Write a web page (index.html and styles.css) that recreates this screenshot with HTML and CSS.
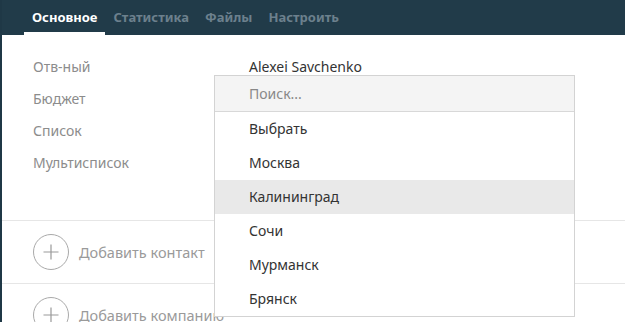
FILE: index.html
```html
<!DOCTYPE html>
<html lang="ru">
<head>
    <meta charset="UTF-8">
    <title>Карточка</title>
    <link rel="stylesheet" href="styles.css">
</head>
<body>
<div class="page">
    <div class="tabs">
        <span class="tab active">Основное</span>
        <span class="tab">Статистика</span>
        <span class="tab">Файлы</span>
        <span class="tab">Настроить</span>
    </div>

    <div class="fields">
        <div class="row">
            <div class="label">Отв-ный</div>
            <div class="value">
                Alexei Savchenko
                <div class="dropdown">
                    <div class="search">Поиск...</div>
                    <div class="item">Выбрать</div>
                    <div class="item">Москва</div>
                    <div class="item hover">Калининград</div>
                    <div class="item">Сочи</div>
                    <div class="item">Мурманск</div>
                    <div class="item">Брянск</div>
                </div>
            </div>
        </div>
        <div class="row"><div class="label">Бюджет</div><div class="value"></div></div>
        <div class="row"><div class="label">Список</div><div class="value"></div></div>
        <div class="row"><div class="label">Мультисписок</div><div class="value"></div></div>
    </div>

    <div class="add">
        <svg class="plus" width="38" height="38" viewBox="0 0 38 38">
            <circle cx="19" cy="19" r="17.5" fill="none" stroke="#a9a9a9" stroke-width="1"/>
            <path d="M19 11.5v15M11.5 19h15" stroke="#999" stroke-width="1.2"/>
        </svg>
        <span>Добавить контакт</span>
    </div>
    <div class="add">
        <svg class="plus" width="38" height="38" viewBox="0 0 38 38">
            <circle cx="19" cy="19" r="17.5" fill="none" stroke="#a9a9a9" stroke-width="1"/>
            <path d="M19 11.5v15M11.5 19h15" stroke="#999" stroke-width="1.2"/>
        </svg>
        <span>Добавить компанию</span>
    </div>
</div>
</body>
</html>
```

FILE: styles.css
```css
body {
    margin: 0;
    font-family: "Noto Sans", "Open Sans", sans-serif;
    font-size: 14px;
    color: #333;
    background: #fff;
    overflow: hidden;
}

.page {
    border-left: 2px solid #1f3846;
    height: 322px;
}

.tabs {
    background: #213b49;
    height: 35px;
    display: flex;
    align-items: stretch;
    padding-left: 22px;
}

.tab {
    padding: 0 8px;
    line-height: 34px;
    font-size: 13px;
    font-weight: bold;
    color: #6c808d;
    border-bottom: 3px solid transparent;
    height: 32px;
}

.tab.active {
    color: #fff;
    border-bottom-color: #fff;
}

.fields {
    padding: 15px 0 42px 31px;
    border-bottom: 1px solid #e6e6e6;
}

.row {
    display: flex;
    height: 32px;
    align-items: center;
}

.label {
    width: 216px;
    color: #8c8c8c;
}

.value {
    position: relative;
    color: #333;
}

.dropdown {
    position: absolute;
    top: 18px;
    left: -35px;
    width: 359px;
    background: #fff;
    border: 1px solid #d3d3d3;
    z-index: 2;
}

.search {
    background: #f4f4f4;
    color: #888;
    height: 35px;
    line-height: 35px;
    padding-left: 34px;
    border-bottom: 1px solid #d8d8d8;
}

.item {
    height: 34px;
    line-height: 34px;
    padding-left: 34px;
}

.item.hover {
    background: #e9e9e9;
}

.add {
    display: flex;
    align-items: center;
    height: 62px;
    padding-left: 30px;
    border-bottom: 1px solid #e6e6e6;
    color: #9a9a9a;
    font-size: 14.5px;
}

.plus {
    margin-right: 9px;
}
```
